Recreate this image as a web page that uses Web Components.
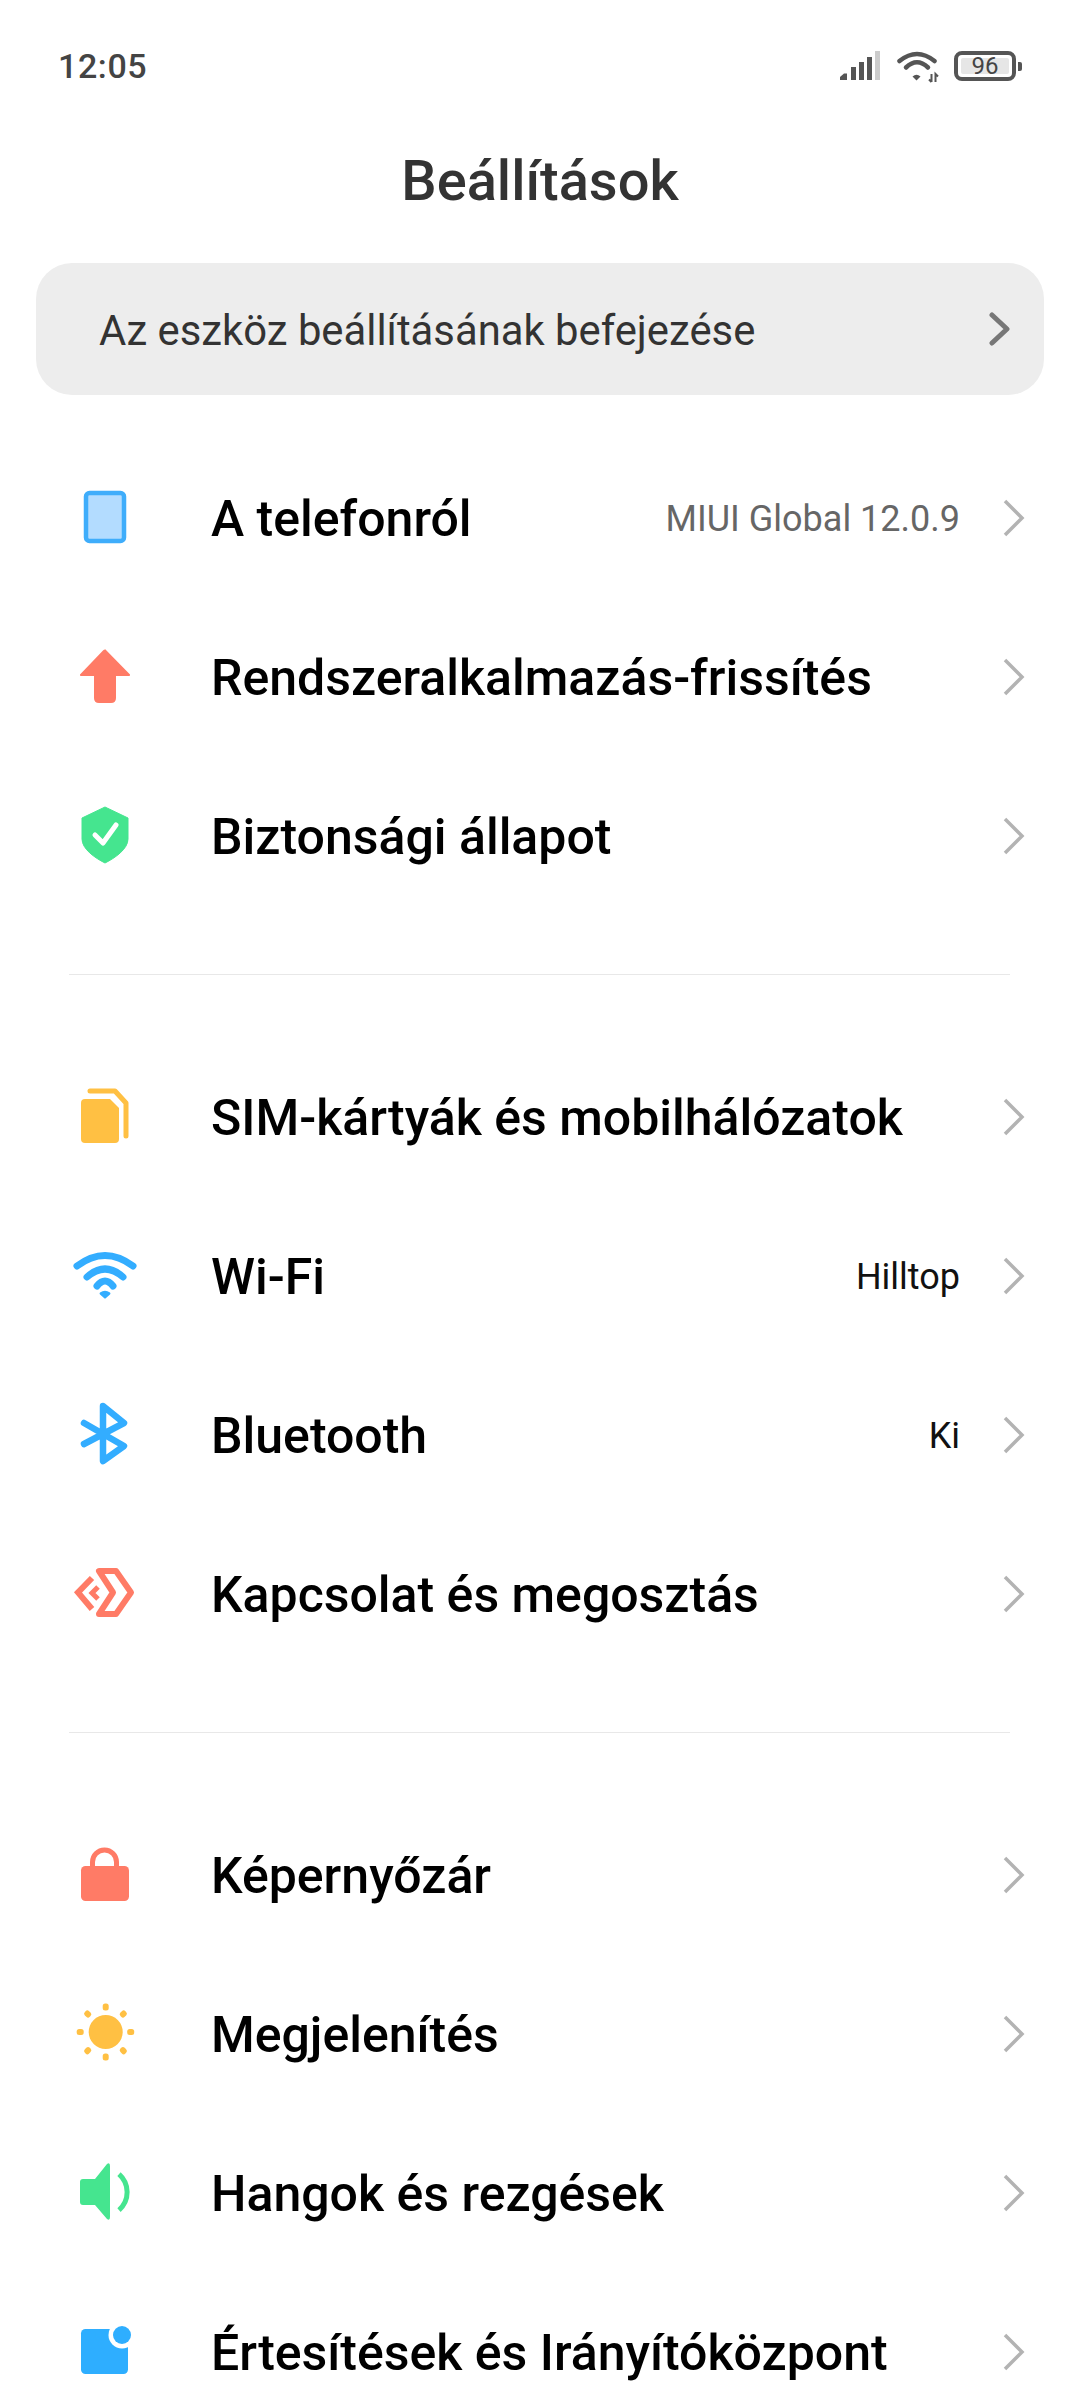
<!DOCTYPE html>
<html lang="hu">
<head>
<meta charset="utf-8">
<title>Beállítások</title>
<style>
  html, body { margin: 0; height: 2400px; overflow: hidden; background: #fff; }
  body { font-family: Roboto, "Noto Sans", sans-serif; }
  svg[slot="icon"] { display: block; width: 80px; height: 80px; }
</style>
</head>
<body>
<settings-app>
  <status-bar time="12:05" battery="96"></status-bar>
  <settings-banner>Az eszköz beállításának befejezése</settings-banner>

  <settings-group divider>
    <settings-row>
      <svg slot="icon" viewBox="0 0 80 80"><rect x="21" y="14" width="38" height="48" rx="3.5" fill="#b3dcff" stroke="#3fadfb" stroke-width="4.5"/></svg>
      A telefonról
      <span slot="value">MIUI Global 12.0.9</span>
    </settings-row>
    <settings-row>
      <svg slot="icon" viewBox="0 0 80 80"><path d="M40 11 65 36.500Q65.500 38 63 38H51V60Q51 65 46 65H34Q29 65 29 60V38H17Q14.500 38 15 36.500L38 12.500Q40 10.500 42 12.500Z" fill="#ff7b66"/></svg>
      Rendszeralkalmazás-frissítés
    </settings-row>
    <settings-row>
      <svg slot="icon" viewBox="0 0 80 80"><path d="M40 10 63 21V42C63 52 50 61 40 66 30 61 17 52 17 42V21Z" fill="#45e58f" stroke="#45e58f" stroke-linejoin="round"/><path d="M30 38 38 46 51 28" fill="none" stroke="#fff" stroke-width="5" stroke-linecap="round" stroke-linejoin="round"/></svg>
      Biztonsági állapot
    </settings-row>
  </settings-group>

  <settings-group divider>
    <settings-row>
      <svg slot="icon" viewBox="0 0 80 80"><path d="M20 21H45L54 30V61Q54 65 50 65H20Q16 65 16 61V25Q16 21 20 21Z" fill="#ffc043"/><path d="M25 13H50L61 25V58" fill="none" stroke="#ffc043" stroke-width="5" stroke-linecap="round" stroke-linejoin="round"/></svg>
      SIM-kártyák és mobilhálózatok
    </settings-row>
    <settings-row>
      <svg slot="icon" viewBox="0 0 80 80"><g fill="none" stroke="#33adff" stroke-width="7" stroke-linecap="round"><path d="M12 29Q40 8 68 29"/><path d="M22 40Q40 24 58 40"/><path d="M32 49Q40 39 48 49"/></g><path d="M35 55.500Q40 52 45 55.500 46 56.500 45 57.500L41 61Q40 62 39 61L35 57.500Q34 56.500 35 55.500Z" fill="#33adff"/></svg>
      Wi-Fi
      <span slot="value" class="dark">Hilltop</span>
    </settings-row>
    <settings-row>
      <svg slot="icon" viewBox="0 0 80 80"><path d="M19 27 59 50 38 65V10L59 27 19 48" fill="none" stroke="#33adff" stroke-width="6.500" stroke-linecap="round" stroke-linejoin="round"/></svg>
      Bluetooth
      <span slot="value" class="dark">Ki</span>
    </settings-row>
    <settings-row>
      <svg slot="icon" viewBox="0 0 80 80"><g fill="none" stroke="#ff7b66"><path d="M34 16H51L66 37.500 51 59H34L48 37.500Z" stroke-width="6" stroke-linejoin="round"/><path d="M27 23 13 37.500 27 54" stroke-width="6"/><path d="M33 32 27 38 33 44" stroke-width="5"/></g></svg>
      Kapcsolat és megosztás
    </settings-row>
  </settings-group>

  <settings-group>
    <settings-row>
      <svg slot="icon" viewBox="0 0 80 80"><path d="M27.500 32V26A12 12 0 0 1 51.500 26V32" fill="none" stroke="#ff7b66" stroke-width="5"/><rect x="16" y="30" width="48" height="35" rx="4.500" fill="#ff7b66"/></svg>
      Képernyőzár
    </settings-row>
    <settings-row>
      <svg slot="icon" viewBox="0 0 80 80"><g fill="#ffc043"><circle cx="40.700" cy="37" r="17"/><rect x="37.700" y="8.500" width="6" height="7" rx="2.500"/><rect x="37.700" y="58.500" width="6" height="7" rx="2.500"/><rect x="11.700" y="34" width="7" height="6" rx="2.500"/><rect x="62.200" y="34" width="7" height="6" rx="2.500"/><rect x="19.200" y="16" width="7" height="6" rx="2.500" transform="rotate(45 22.700 19)"/><rect x="54.800" y="16" width="7" height="6" rx="2.500" transform="rotate(-45 58.300 19)"/><rect x="19.200" y="52.700" width="7" height="6" rx="2.500" transform="rotate(-45 22.700 55.700)"/><rect x="54.800" y="52.700" width="7" height="6" rx="2.500" transform="rotate(45 58.300 55.700)"/></g></svg>
      Megjelenítés
    </settings-row>
    <settings-row>
      <svg slot="icon" viewBox="0 0 80 80"><path d="M18 25H30L42 10Q45 8 45 12V63Q45 67 42 65L30 51H18Q15 51 15 48V28Q15 25 18 25Z" fill="#45e58f"/><path d="M54 20A24 24 0 0 1 54 56" fill="none" stroke="#45e58f" stroke-width="5"/></svg>
      Hangok és rezgések
    </settings-row>
    <settings-row>
      <svg slot="icon" viewBox="0 0 80 80"><rect x="16" y="16" width="47" height="45" rx="4.500" fill="#2eaeff"/><circle cx="57" cy="22" r="13.500" fill="#fff"/><circle cx="57" cy="22" r="9" fill="#2eaeff"/></svg>
      Értesítések és Irányítóközpont
    </settings-row>
  </settings-group>
</settings-app>

<script>
class SettingsApp extends HTMLElement {
  constructor() {
    super();
    this.attachShadow({ mode: 'open' });
    this.shadowRoot.innerHTML = `
      <style>
        :host { display: block; width: 1080px; height: 2400px; overflow: hidden; }
        h1 {
          margin: 0;
          padding: 1px 0 50px;
          height: 64px;
          line-height: 64px;
          text-align: center;
          font-size: 56px;
          font-weight: 500;
          color: #333;
        }
      </style>
      <slot name="status"></slot>
      <h1>Beállítások</h1>
      <slot></slot>
    `;
  }
  connectedCallback() {
    this.querySelector('status-bar').slot = 'status';
  }
}
customElements.define('settings-app', SettingsApp);

class StatusBar extends HTMLElement {
  constructor() {
    super();
    this.attachShadow({ mode: 'open' });
    this.shadowRoot.innerHTML = `
      <style>
        :host {
          display: flex;
          align-items: center;
          box-sizing: border-box;
          height: 148px;
          padding: 0 58px 16px;
          color: #444;
        }
        .time { flex: 1; font-size: 34px; font-weight: 500; letter-spacing: .6px; }
        .signal { display: block; width: 42px; height: 32px; margin-right: 16px; }
        .wifi { display: block; width: 42px; height: 34px; margin-right: 15px; }
        .battery {
          box-sizing: border-box;
          width: 62px;
          height: 30px;
          padding: 3px;
          border: 4px solid #555;
          border-radius: 8px;
          display: flex;
        }
        .level {
          flex: 1;
          background: #e6e6e6;
          border-radius: 2px;
          font-size: 24px;
          line-height: 16px;
          text-align: center;
          color: #444;
        }
        .nub { width: 4px; height: 9px; margin-left: 2px; background: #555; border-radius: 0 2px 2px 0; }
      </style>
      <span class="time">${this.getAttribute('time')}</span>
      <svg class="signal" viewBox="0 0 42 32">
        <g fill="#555">
          <path d="M1 30V27L5 23.500H8V30Z"/>
          <rect x="12" y="17" width="5" height="13"/>
          <rect x="20" y="12" width="5" height="18"/>
          <rect x="28" y="7" width="5" height="23"/>
        </g>
        <rect x="36" y="1" width="5" height="29" fill="#ccc"/>
      </svg>
      <svg class="wifi" viewBox="0 0 42 34">
        <g fill="none" stroke="#555" stroke-width="4.500" stroke-linecap="round">
          <path d="M2.500 12Q20-2 37.500 12"/>
          <path d="M9 18.500Q20 8 31 18.500"/>
        </g>
        <path d="M15.500 27.500Q19.500 24 23.500 27.500L19.500 31.500Z" fill="#555"/>
        <path d="M34.500 25V33M32 30.500 34.500 33M38.500 33V25L41 27.500" fill="none" stroke="#555" stroke-width="2"/>
      </svg>
      <span class="battery"><span class="level">${this.getAttribute('battery')}</span></span>
      <span class="nub"></span>
    `;
  }
}
customElements.define('status-bar', StatusBar);

class SettingsBanner extends HTMLElement {
  constructor() {
    super();
    this.attachShadow({ mode: 'open' });
    this.shadowRoot.innerHTML = `
      <style>
        :host {
          display: flex;
          align-items: center;
          justify-content: space-between;
          box-sizing: border-box;
          width: 1008px;
          height: 132px;
          margin: 0 36px 44px;
          padding: 0 34px 0 63px;
          border-radius: 36px;
          background: #ededed;
          font-size: 41.8px;
          color: #333;
        }
        .text { padding-top: 3px; }
        svg { display: block; width: 24px; height: 40px; }
      </style>
      <span class="text"><slot></slot></span>
      <svg viewBox="0 0 24 40"><path d="M6 6 21 20 6 34" fill="none" stroke="#777" stroke-width="5" stroke-linecap="round" stroke-linejoin="round"/></svg>
    `;
  }
}
customElements.define('settings-banner', SettingsBanner);

class SettingsGroup extends HTMLElement {
  constructor() {
    super();
    this.attachShadow({ mode: 'open' });
    this.shadowRoot.innerHTML = `
      <style>
        :host { display: block; }
        .rule { height: 1px; margin: 58px 70px 63px 69px; background: #e8e8e8; }
      </style>
      <slot></slot>
      ${this.hasAttribute('divider') ? '<div class="rule"></div>' : ''}
    `;
  }
}
customElements.define('settings-group', SettingsGroup);

class SettingsRow extends HTMLElement {
  constructor() {
    super();
    this.attachShadow({ mode: 'open' });
    this.shadowRoot.innerHTML = `
      <style>
        :host {
          display: flex;
          align-items: center;
          box-sizing: border-box;
          height: 159px;
          padding: 0 54px 0 65px;
          font-size: 50px;
          font-weight: 500;
          color: #000;
          white-space: nowrap;
        }
        .label { flex: 1; margin-left: 66px; padding-top: 1px; }
        .value { font-size: 36px; font-weight: 400; color: #666; margin-right: 42px; padding-top: 1px; }
        svg { display: block; width: 24px; height: 40px; }
      </style>
      <slot name="icon"></slot>
      <span class="label"><slot></slot></span>
      <span class="value"><slot name="value"></slot></span>
      <svg viewBox="0 0 24 40"><path d="M3 2 20 19 3 36" fill="none" stroke="#b3b3b3" stroke-width="3.500"/></svg>
    `;
    const value = this.querySelector('[slot="value"]');
    if (value && value.classList.contains('dark')) {
      this.shadowRoot.querySelector('.value').style.color = '#111';
    }
  }
}
customElements.define('settings-row', SettingsRow);
</script>
</body>
</html>
